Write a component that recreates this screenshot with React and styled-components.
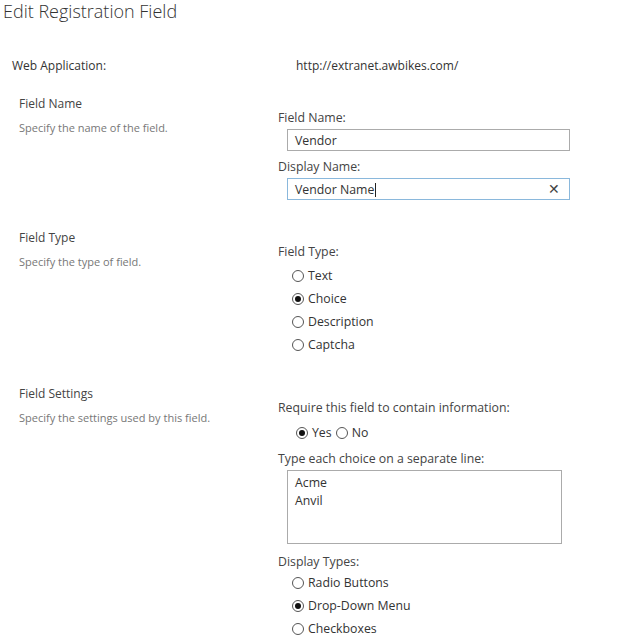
import React from "react";
import styled, { createGlobalStyle } from "styled-components";

const GlobalStyle = createGlobalStyle`
  html, body {
    margin: 0;
    padding: 0;
    background: #ffffff;
  }
  body {
    font-family: "Open Sans", "Noto Sans", Arial, sans-serif;
    color: #444444;
  }
`;

const Page = styled.div`
  width: 625px;
  height: 640px;
  overflow: hidden;
  background: #ffffff;
`;

const Title = styled.h1`
  margin: 0;
  padding: 0 0 0 3px;
  height: 22px;
  line-height: 22px;
  font-size: 18px;
  font-weight: 300;
  color: #333333;
`;

const AppRow = styled.div`
  display: grid;
  grid-template-columns: 284px 1fr;
  margin-top: 36px;
  padding-left: 12px;
  font-size: 12px;
  line-height: 16px;
  color: #333333;
`;

const Section = styled.div`
  display: grid;
  grid-template-columns: 259px 1fr;
  padding-left: 19px;
  padding-bottom: ${(p) => p.$bottom || 30}px;
  margin-top: ${(p) => p.$top || 0}px;
`;

const Info = styled.div`
  display: flex;
  flex-direction: column;
  gap: 8px;
`;

const Heading = styled.div`
  font-size: 12px;
  line-height: 16px;
  color: #444444;
`;

const Desc = styled.div`
  font-size: 11px;
  line-height: 16px;
  color: #777777;
`;

const Controls = styled.div`
  display: flex;
  flex-direction: column;
  padding-top: 14px;
`;

const Label = styled.div`
  font-size: 12.3px;
  line-height: 16px;
  color: #444444;
  margin-top: ${(p) => p.$top || 0}px;
`;

const TextBox = styled.div`
  box-sizing: border-box;
  display: flex;
  align-items: center;
  justify-content: space-between;
  width: 283px;
  height: 22px;
  margin: 3px 0 0 9px;
  padding: 0 9px 0 7px;
  border: 1px solid ${(p) => (p.$focused ? "#8ab8dc" : "#ababab")};
  font-size: 12.3px;
  color: #333333;
  background: #ffffff;
`;

const Caret = styled.span`
  display: inline-block;
  width: 1px;
  height: 14px;
  margin-left: 1px;
  vertical-align: -3px;
  background: #222222;
`;

const Clear = styled.span`
  font-size: 14px;
  line-height: 1;
  color: #444444;
`;

const RadioList = styled.div`
  display: flex;
  flex-direction: ${(p) => (p.$inline ? "row" : "column")};
  gap: ${(p) => (p.$inline ? "4px" : "0")};
  margin-top: ${(p) => p.$top || 0}px;
  padding-left: ${(p) => p.$indent || 14}px;
`;

const RadioItem = styled.label`
  display: flex;
  align-items: center;
  height: 23px;
  gap: 4px;
  font-size: 12.3px;
  color: #333333;
`;

const Circle = styled.span`
  box-sizing: border-box;
  width: 12px;
  height: 12px;
  border-radius: 50%;
  border: 1px solid #555555;
  display: flex;
  align-items: center;
  justify-content: center;
  background: #ffffff;

  &::after {
    content: "";
    width: 6px;
    height: 6px;
    border-radius: 50%;
    background: ${(p) => (p.$checked ? "#111111" : "transparent")};
  }
`;

const ChoiceArea = styled.div`
  box-sizing: border-box;
  width: 275px;
  height: 74px;
  margin: 3px 0 0 9px;
  padding: 3px 7px;
  border: 1px solid #ababab;
  font-size: 12.3px;
  line-height: 18px;
  color: #333333;
`;

const Radio = ({ label, checked }) => (
  <RadioItem>
    <Circle $checked={checked} />
    {label}
  </RadioItem>
);

const App = () => {
  return (
    <Page>
      <GlobalStyle />
      <Title>Edit Registration Field</Title>

      <AppRow>
        <span>Web Application:</span>
        <span>http://extranet.awbikes.com/</span>
      </AppRow>

      <Section $top={22}>
        <Info>
          <Heading>Field Name</Heading>
          <Desc>Specify the name of the field.</Desc>
        </Info>
        <Controls>
          <Label>Field Name:</Label>
          <TextBox>Vendor</TextBox>
          <Label $top={8}>Display Name:</Label>
          <TextBox $focused>
            <span>
              Vendor Name
              <Caret />
            </span>
            <Clear>✕</Clear>
          </TextBox>
        </Controls>
      </Section>

      <Section>
        <Info>
          <Heading>Field Type</Heading>
          <Desc>Specify the type of field.</Desc>
        </Info>
        <Controls>
          <Label>Field Type:</Label>
          <RadioList $top={4}>
            <Radio label="Text" />
            <Radio label="Choice" checked />
            <Radio label="Description" />
            <Radio label="Captcha" />
          </RadioList>
        </Controls>
      </Section>

      <Section>
        <Info>
          <Heading>Field Settings</Heading>
          <Desc>Specify the settings used by this field.</Desc>
        </Info>
        <Controls>
          <Label>Require this field to contain information:</Label>
          <RadioList $inline $indent={18} $top={5}>
            <Radio label="Yes" checked />
            <Radio label="No" />
          </RadioList>
          <Label $top={7}>Type each choice on a separate line:</Label>
          <ChoiceArea>
            Acme
            <br />
            Anvil
          </ChoiceArea>
          <Label $top={10}>Display Types:</Label>
          <RadioList $top={1}>
            <Radio label="Radio Buttons" />
            <Radio label="Drop-Down Menu" checked />
            <Radio label="Checkboxes" />
          </RadioList>
        </Controls>
      </Section>
    </Page>
  );
};

export default App;
